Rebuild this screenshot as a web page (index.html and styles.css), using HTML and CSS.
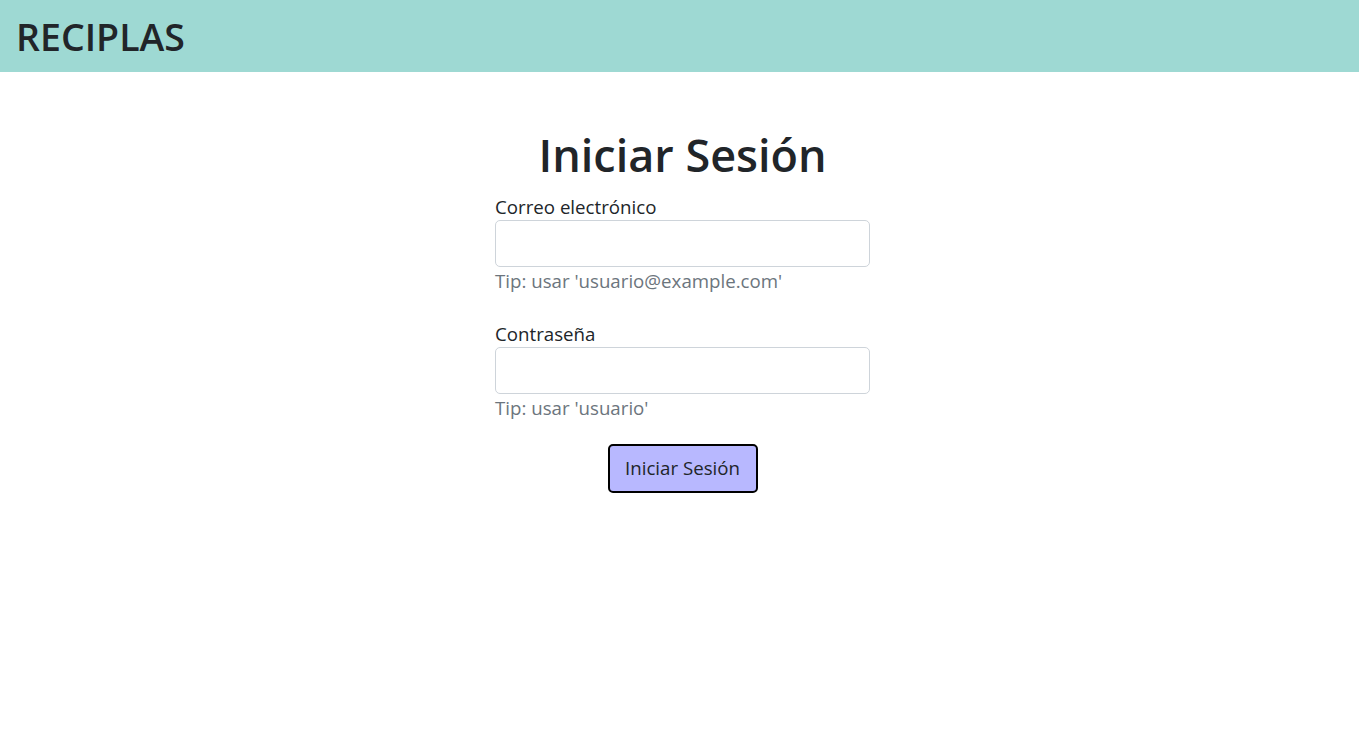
FILE: index.html
```html
<!DOCTYPE html>
<html lang="es">
<head>
<meta charset="utf-8">
<title>RECIPLAS</title>
<link rel="stylesheet" href="styles.css">
</head>
<body>
<header class="topbar">
  <h1 class="brand">RECIPLAS</h1>
</header>
<main class="page">
  <form class="login">
    <h2 class="login-title">Iniciar Sesión</h2>
    <div class="field">
      <label class="field-label" for="email">Correo electrónico</label>
      <input class="field-input" id="email" type="email">
      <div class="field-tip">Tip: usar 'usuario@example.com'</div>
    </div>
    <div class="field">
      <label class="field-label" for="pass">Contraseña</label>
      <input class="field-input" id="pass" type="password">
      <div class="field-tip">Tip: usar 'usuario'</div>
    </div>
    <div class="actions">
      <button class="submit" type="button">Iniciar Sesión</button>
    </div>
  </form>
</main>
</body>
</html>
```
FILE: styles.css
```css
* { box-sizing: border-box; }
html, body { margin: 0; padding: 0; }
body {
  font-family: "Open Sans", "Noto Sans", sans-serif;
  color: #212529;
  background: #fff;
  font-size: 18.7px;
  line-height: 1.5;
}
.topbar {
  background: #9ed9d3;
  height: 72px;
  display: flex;
  align-items: center;
  padding: 0 16px;
}
.brand {
  margin: 0;
  font-size: 37.5px;
  font-weight: 600;
  line-height: 1.2;
  color: #212529;
}
.page {
  display: flex;
  justify-content: center;
  padding-top: 56px;
  padding-left: 6px;
}
.login {
  width: 375px;
  display: flex;
  flex-direction: column;
}
.login-title {
  margin: 0 0 11px;
  text-align: center;
  font-size: 45px;
  font-weight: 600;
  line-height: 1.2;
}
.field { display: flex; flex-direction: column; margin-bottom: 26px; }
.field:nth-of-type(2) { margin-bottom: 23px; }
.field-label { line-height: 27px; height: 27px; }
.field-input {
  height: 47px;
  border: 1px solid #ced4da;
  border-radius: 5px;
  font: inherit;
  padding: 6px 12px;
}
.field-tip { color: #6c757d; line-height: 27px; }
.actions { display: flex; justify-content: center; }
.submit {
  width: 150px;
  height: 49px;
  background: #b8b8ff;
  border: 2px solid #000;
  border-radius: 5px;
  font: inherit;
  color: #212529;
  cursor: pointer;
}
```
